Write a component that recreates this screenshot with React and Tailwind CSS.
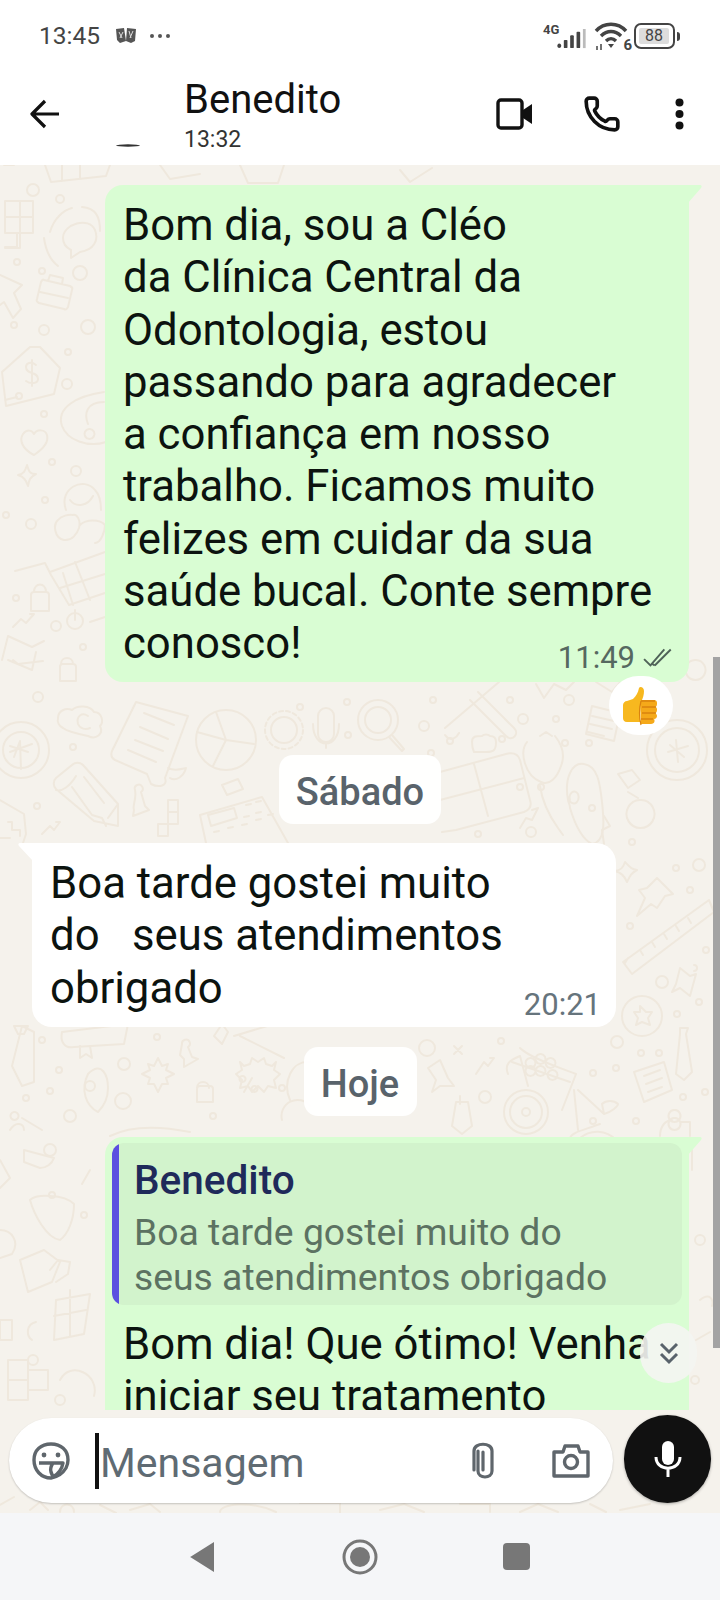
import { Phone } from "lucide-react";

const font = { fontFamily: "Roboto, sans-serif" };

// small rings scattered across the wallpaper
const rings = [
  [33, 190, 6], [60, 199, 4], [17, 262, 3], [42, 271, 3], [80, 273, 7], [14, 325, 3], [44, 330, 5], [88, 327, 7],
  [68, 352, 3], [67, 384, 5], [44, 414, 3], [52, 462, 3], [76, 471, 5], [45, 500, 3], [6, 515, 3], [31, 524, 5],
  [16, 598, 3], [56, 626, 5], [83, 647, 3], [38, 697, 5], [73, 747, 3], [37, 806, 3], [300, 707, 3], [347, 702, 3],
  [348, 735, 3], [424, 726, 5], [433, 700, 3], [450, 741, 3], [510, 700, 3], [523, 719, 5], [556, 719, 3], [569, 700, 5],
  [502, 739, 3], [431, 753, 3], [565, 743, 3], [520, 787, 3], [589, 743, 3], [541, 787, 3], [478, 834, 3], [531, 832, 5],
  [592, 808, 3], [632, 842, 3], [676, 868, 3], [699, 865, 6], [690, 890, 3], [630, 926, 3], [706, 950, 3], [662, 982, 6],
  [699, 1002, 3], [677, 1014, 3], [42, 1040, 3], [124, 1064, 6], [59, 1070, 3], [157, 1037, 3], [50, 1091, 3], [26, 1098, 3],
  [70, 1116, 6], [123, 1101, 8], [213, 1116, 3], [282, 1088, 3], [427, 1048, 8], [501, 1041, 3], [617, 1042, 6], [641, 1053, 3],
  [659, 1053, 3], [593, 1073, 3], [616, 1068, 3], [593, 1121, 3], [683, 1097, 3], [485, 1097, 6], [705, 1092, 3], [636, 1121, 3],
  [52, 1195, 3], [84, 1215, 3], [50, 1150, 6], [33, 1360, 5], [60, 1400, 5], [695, 1380, 4], [700, 1240, 5],
];

const Wallpaper = () => (
  <svg
    className="absolute inset-0 w-full h-full"
    viewBox="0 165 720 1348"
    fill="none"
    stroke="#efe8dd"
    strokeWidth="2"
    strokeLinejoin="round"
    strokeLinecap="round"
  >
    {rings.map(([x, y, r], i) => (
      <circle key={i} cx={x} cy={y} r={r} />
    ))}
    {/* top strip */}
    <path d="M45 165l6 17 55-6 4-11M62 165v16M80 165v14M14 165h-10M160 165l10 14 30-5M240 165l8 18h30l6-18M400 170l10 12 22-14" />
    <path d="M5 201h28v32h-28zM33 217h-28M5 233h12v14h-12M20 201v47h-15" />
    <path d="M63 238c0-14 26-22 32-8 4 10-1 20-15 22l-9 6 0-8c-6-3-8-7-8-12zM50 232c4-14 14-22 22-24M44 238c2 14 6 22 14 28M82 207c14 1 18 10 18 24" />
    <path d="M0 275l22 10-8 8 7 16-8 9-9-16-4 3" />
    {/* briefcase */}
    <path d="M44 280l26 6c2 1 3 2 2 4l-4 17c-1 2-2 3-4 2l-25-6c-2-1-3-2-2-4l4-17c1-2 2-3 3-2zM48 281l2-6 13 3-1 6M40 292l28 6" />
    {/* price tag */}
    <path d="M30 347l-28 25 4 34 48-12 6-26-20-21zM36 365c-5-4-10-2-10 2 0 8 12 4 12 12 0 5-8 5-12 2M32 360v26M5 400l12-3" />
    <circle cx="19" cy="396" r="3" />
    {/* mouse */}
    <path d="M104 392c-28 4-48 16-42 34 5 14 26 22 44 16M104 402c-18 0-20 12-16 22M89 429a5 5 0 1 0 1 0" />
    {/* heart + star */}
    <path d="M34 455c-12-6-15-15-11-21 4-5 9-4 11 0 3-5 11-5 13 1 2 7-4 14-13 20zM27 465c2 7 3 9 9 9-6 3-7 6-8 12-2-6-4-9-10-11 6-1 7-4 9-10z" />
    {/* ball and smile */}
    <path d="M66 510c-8-22 18-34 29-20 4 4 6 12 6 20M70 500c6 8 18 6 23-4M58 520c-5 4-4 18 6 20 8 1 13-6 15-12 2-8-2-14-6-13-4-1-12 1-15 5M80 525c6-6 20-6 25 0 0 6-4 18-10 18" />
    {/* cart */}
    <path d="M15 571l30-8 6 12 18 30 36-12M50 572l55-20M60 588l45-14M73 605l-10-32M90 600l-15-38M75 610v10M90 622l18-6" />
    <circle cx="75" cy="621" r="8" />
    {/* locks, arrow, envelope */}
    <path d="M34 592h12a3 3 0 0 1 3 3v16h-18v-16a3 3 0 0 1 3-3zM34 592c0-10 12-10 12 0M62 664h11a3 3 0 0 1 3 3v14h-16v-14a3 3 0 0 1 2-3zM61 664c0-8 12-8 12 0" />
    <path d="M13 627l8-8 5 4 8-9-4 0M8 636l24 11 12-6M2 660l6-24M8 660l24 10 4-18M13 660l5 4 25-3" />
    {/* cloud + compass + pencil */}
    <path d="M58 718c0-7 8-11 14-8 5-5 18-5 22 2 8 0 10 10 6 14 4 8-4 14-12 10-10-2-20-4-25-8-4-2-6-6-5-10zM88 716c-6-4-12 0-10 8 2 5 8 6 12 4" />
    <circle cx="21" cy="750" r="28" />
    <circle cx="21" cy="750" r="18" />
    <path d="M14 757l6-16 1 28M10 752l22-8M10 746l18 6" />
    <path d="M56 778l16-13a8 8 0 0 1 11 0l35 39 0 22-24-5-38-32c-3-3-3-8 0-11zM56 790c6 2 14-4 20-14M72 787l20 28M84 777l20 26M92 815l10 3 4 8M118 804l-10 14" />
    {/* receipt and pie */}
    <path d="M136 702l52 14-23 62c3 8-6 10-14 6l-4-10-32-14c-4-2-4-6-3-9zM144 713l30 12M140 727l28 12M135 740l28 11M128 750l28 12M168 768c8 4 16 0 18 0-2 8-10 14-16 10" />
    <circle cx="226" cy="740" r="30" />
    <path d="M216 712l10 28 28 4M226 740l-13 26M197 732l29 8" />
    {/* gear */}
    <circle cx="284" cy="730" r="13" />
    <circle cx="284" cy="730" r="19" strokeDasharray="4 3" />
    {/* chess piece + tetris */}
    <path d="M135 790a4 4 0 1 1 6 2l4 14 4 4-16 6 1-6c-2-4 3-12 1-20zM168 800h10v12h-10zM168 812h10v12h-10zM158 824h10v12h-10z" />
    {/* till */}
    <path d="M200 815l62-18 26 46M206 843l-6-28M222 785l16-6 5 10-16 6zM208 815l26-7 3 10-26 8zM246 805l5-1M256 802l5-1M244 817l5-1M256 813l5-1M214 832l5-1M228 828l5-1M242 825l5-1M256 820l5-1M268 815l5-1" />
    {/* shield */}
    <path d="M0 800l24 14 2 20-3 9M8 822h4v8h8v6M0 838h10" />
    <path d="M42 834l8-8 4 4 6-8-4 0" />
    {/* mic, magnifier, wrench */}
    <path d="M318 716a8 8 0 0 1 16 0v18a8 8 0 0 1-16 0zM313 724c0 26 26 26 26 0M326 742v6" />
    <circle cx="378" cy="720" r="20" />
    <circle cx="378" cy="720" r="13" />
    <path d="M392 735l12 14-2 2-13-14M445 728l54-46M470 700l36 36c6 6 14-2 8-8l-36-36M445 735c6 8 12 2 14-2M472 742c0-6 4-6 10-6 2-2 6-2 8 0 4 0 6 2 6 6 0 8-2 10-10 10h-12c-2-4-2-6-2-10z" />
    {/* table */}
    <path d="M440 772l66-18c8-2 12 0 14 6l10 40c2 6-1 10-6 12l-68 18-14 2M474 764l14 52M440 800l84-22" />
    {/* stethoscope */}
    <path d="M527 742c-8 10-2 34 14 40 8 4 16-4 20-16 4-10 2-20-6-30M540 736l6-4 6 4M540 786c2 14 8 28 18 42l5 7" />
    {/* long mouse */}
    <path d="M568 800c-4-22 4-38 16-36 14 2 16 20 18 38 2 18 4 40-10 42-8-4-16-16-22-36 0-4-2-6-2-8zM568 800c8 8 12 0 10-6-4-6-10 0-8 6" />
    <path d="M520 828l6-10 6 2 6-12-6 2" />
    {/* note by the reaction */}
    <path d="M592 706l28 7-6 28-28-7zM592 716l22 5M590 724l22 5M588 732l16 4" />
    <path d="M536 684l8 14 10-14 12 6 8-8M596 682l16 10 10-12" />
    <circle cx="677" cy="750" r="22" />
    <circle cx="677" cy="750" r="30" />
    <path d="M668 752l20-6M676 740l2 22M670 745l14 12" />
    <path d="M632 770l8 10-12 8-10-14zM628 792l10 6M604 816l6 10-8 4 2 14M640 800a14 14 0 1 0 1 0" />
    <path d="M695 660a10 10 0 1 0 1 0" />
    {/* pushpin, ruler, core */}
    <path d="M625 862c5 5 6 7 12 8-6 3-7 6-10 12-3-7-6-9-12-11 6-1 8-3 10-9zM657 878l16 16-8 2-8 12-6-4-14 12 8-18-6-8 8-2z" />
    <path d="M623 962l86-62 5 12-82 62zM628 958l-3 5M640 950l3 5M652 942l3 5M664 934l3 5M676 926l3 5M688 918l3 5" />
    <path d="M680 968l10 8 6-2-6 22-10-8-8 4 4-8zM694 965a3 3 0 1 1 0 6" />
    <circle cx="642" cy="1016" r="20" />
    <path d="M640 1006l6 6 6 0-4 6 2 7-8-3-6 3 2-7-4-6 6 0z" />
    {/* bottom row left */}
    <path d="M22 1026l-10 40 10 20 12-4 0-50zM14 1026l14 0-4 8-6 0zM62 1032l66-8-4 20-50 3c-10 2-14-6-12-15zM80 1046l0 12 6-4 6 4-2-12" />
    <path d="M88 1074c14-14 20 2 20 14 0 6-2 16-10 24-12-6-18-22-10-38z" />
    <circle cx="90" cy="1086" r="5" />
    <path d="M158 1058l4 8 6-2-2 6 8 4-8 4 2 6-6 0-4 8-4-8-6 0 2-6-8-4 8-4-2-6 6 2zM182 1044a4 4 0 1 1 6 3l4 10 6 2-14 8 0-8-4-4zM222 1024l-8 12 8 8 6-12zM234 1036l40-12M240 1036l44 22M200 1086h10a3 3 0 0 1 3 3v13h-16v-13a3 3 0 0 1 3-3zM197 1088c0-8 12-8 12 0" />
    <path d="M240 1062l4 4 6-2 2-6 6 4 6-4 2 6 6 2 4-4-2 8 6 4-6 6 2 8-8-2-4 6-6-6-6 6-4-6-8 2 2-8-6-6 6-4zM244 1092l8-14M242 1076a3 3 0 1 0 1 0M254 1086a3 3 0 1 0 1 0" />
    <path d="M310 1062c-18-2-28 20-20 38M282 1120a16 16 0 0 1 28-14M10 1130c6-10 14-6 14 0M14 1112a4 4 0 1 0 1 0M22 1118l20 12M110 1136c20-10 50-10 80-4" />
    {/* star, bike etc. */}
    <path d="M440 1060l8 18 6 8-14 0-8 6 4-12-8-12zM454 1046l8 8M462 1046l-8 8M476 1074l8-12 4 4 6-8-4 0" />
    <circle cx="526" cy="1112" r="22" />
    <circle cx="526" cy="1112" r="16" />
    <circle cx="526" cy="1112" r="4" />
    <path d="M512 1062l58 20M508 1074c-4-10 2-14 12-18l8 30M520 1048c10 10 40 20 56 26l-14 36M578 1090l26 24M574 1090l4 40M604 1114c8-2 14-8 14-10-4-4-12-4-16 0zM600 1124c-16 6-28 8-30 14M616 1140a26 26 0 0 0-36-2" />
    <path d="M530 1058a5 5 0 1 0 1 0M540 1054a5 5 0 1 0 1 0M550 1058a5 5 0 1 0 1 0M540 1066a5 5 0 1 0 1 0M552 1070a5 5 0 1 0 1 0M530 1066a5 5 0 1 0 1 0" />
    <path d="M634 1072l30-10 8 28-28 12zM644 1076l16-6M646 1084l16-6M648 1092l14-5M680 1028h8l-2 6 6 38-8 8-8-6 4-40zM456 1102h12l4 24-10 8-10-8zM460 1096v8" />
    <path d="M660 1136c0-10 6-16 12-16M690 1136v-14h-10M674 1110a6 6 0 1 0 1 0M674 1118a6 6 0 1 0 1 0" />
    {/* lower left strip */}
    <path d="M30 1200c6-6 34-6 44 4 0 16-6 30-14 36-14-2-26-26-30-40zM20 1260l24-10 16 12-8 20-24 10zM24 1150l30 8c-2 6-8 10-14 10l-16-6zM50 1270l8-10 12 2-2 12-12 8M56 1300l34-6-6 40-30 6zM70 1290v46M54 1316l32-6M32 1340c-6-4-6-16 4-18M8 1360h20v20h-20zM8 1380h20v20h-20zM28 1370h20v20h-20zM60 1380c10-20 40-6 34 16" />
    <path d="M0 1160l10 18-10 10M0 1230c12 0 20 12 12 24l-12 4M90 1170l-8 14M0 1320h12v20h-12z" />
    <path d="M692 1150v20M700 1300c10-8 14 0 12 6M696 1340l14-8M0 1505l14-8M30 1510l10-8 8 8M60 1512c0-10 14-10 14 0M100 1505l16 8M130 1510l20-6 10 8M220 1512c0-8 30-12 56 0M300 1503h40v10M380 1510l24-6 20 8M460 1504h30v8M520 1512l18-8 20 8M590 1504l16 8M620 1510l30-6" />
  </svg>
);

const Reaction = () => (
  <svg viewBox="0 0 40 40" className="w-[40px] h-[40px]">
    <path d="M2 19c0-2 2-4 4-4l6-2c3-3 5-6 6-11 1-2 5-1 5 3 0 4-1 7-3 11l-1 20-13 0c-3 0-4-2-4-4z" fill="#f7b81f" />
    <path d="M20 14h13c2 0 3 1 3 3v1c0 2-1 3-2 3 2 0 2 2 2 3 0 2-1 3-2 3 1 0 2 2 2 3s-1 3-3 3c1 1 1 5-3 5h-10z" fill="#f5a91a" />
    <path d="M20 15h14M21 21h14M21 27h14M20 33h12" stroke="#d9820f" strokeWidth="1.4" fill="none" />
    <path d="M20 15c-2 8-2 16 0 24" stroke="#d9820f" strokeWidth="1.2" fill="none" />
  </svg>
);

const Ticks = () => (
  <svg viewBox="0 0 30 20" className="w-[32px] h-[22px]" fill="none" stroke="#4f6258" strokeWidth="1.8">
    <path d="M1 11l6 6L20 2M11 17L26 2M8 15l3 2" />
  </svg>
);

const Tail = ({ side, color }) =>
  side === "right" ? (
    <svg className="absolute top-0 right-[-13px] w-[14px] h-[18px]" viewBox="0 0 14 18">
      <path d="M0 0h12c2 0 2 2 1 3L0 18z" fill={color} />
    </svg>
  ) : (
    <svg className="absolute top-0 left-[-14px] w-[15px] h-[18px]" viewBox="0 0 15 18">
      <path d="M15 0H2C0 0 0 2 1 3l14 15z" fill={color} />
    </svg>
  );

const DayChip = ({ children, className }) => (
  <div className={`self-center shrink-0 pt-[5px] rounded-[14px] bg-white/95 flex items-center justify-center text-[38px] font-medium text-[#59636b] ${className}`}>
    {children}
  </div>
);

const StatusBar = () => (
  <div className="h-[62px] flex items-center pl-[39px] pr-[40px] pt-[10px] text-[#444]">
    <span className="text-[24.5px] leading-none">13:45</span>
    <svg viewBox="0 0 22 16" className="ml-[15px] w-[22px] h-[16px]" fill="#555">
      <path d="M1 1l8-1 2 13-6 2-3-3zM12 0l9 1-1 12-4 2-5-2z" />
      <path d="M4 4l3 6M8 4l-3 6M14 3l2 7M18 3l-3 7" stroke="#ddd" strokeWidth="1" />
    </svg>
    <svg viewBox="0 0 22 6" className="ml-[12px] w-[22px] h-[6px]" fill="#555">
      <circle cx="3" cy="3" r="2" />
      <circle cx="11" cy="3" r="2" />
      <circle cx="19" cy="3" r="2" />
    </svg>
    <div className="ml-auto flex items-center">
      <div className="relative w-[44px] h-[26px]">
        <span className="absolute left-0 top-0 text-[13px] font-bold leading-none text-[#444]">4G</span>
        <svg viewBox="0 0 32 22" className="absolute right-0 bottom-0 w-[30px] h-[20px]" fill="#444">
          <rect x="0" y="16" width="4" height="5" rx="2" />
          <rect x="7" y="12" width="4" height="9" rx="1" />
          <rect x="14" y="7" width="4" height="14" rx="1" />
          <rect x="21" y="3" width="4" height="18" rx="1" />
          <rect x="28" y="0" width="3" height="21" fill="#bbb" />
        </svg>
      </div>
      <div className="relative ml-[7px] w-[34px] h-[30px]">
        <svg viewBox="0 0 34 30" className="w-[34px] h-[30px]" fill="none" stroke="#444" strokeWidth="3.4">
          <path d="M2 10c8-9 22-9 30 0M7 15c6-6 14-6 20 0M12 20c3-3 7-3 10 0" />
          <path d="M14 23h6l-3 4z" fill="#444" stroke="none" />
          <path d="M3 25v4M7 23v6" strokeWidth="1.5" />
        </svg>
        <span className="absolute right-[-4px] bottom-[-2px] text-[15px] font-bold leading-none text-[#444]">6</span>
      </div>
      <div className="ml-[6px] w-[41px] h-[26px] border-2 border-[#444] rounded-[7px] p-[3px] flex">
        <div className="w-[30px] bg-[#ddd] rounded-[2px] flex items-center justify-center text-[16px] leading-none text-[#444]">88</div>
      </div>
      <div className="ml-[2px] w-[3px] h-[9px] bg-[#444] rounded-r-sm" />
    </div>
  </div>
);

const Header = () => (
  <div className="h-[103px] flex items-center pl-[30px] pr-[36px] bg-white relative z-10">
    <svg viewBox="0 0 30 30" className="w-[30px] h-[30px] shrink-0" fill="none" stroke="#111" strokeWidth="3.2" strokeLinejoin="round">
      <path d="M29 15H3M15 2L2 15l13 13" />
    </svg>
    <svg viewBox="0 0 26 4" className="absolute left-[115px] top-[82px] w-[26px] h-[4px]">
      <ellipse cx="13" cy="1.5" rx="12" ry="1.2" fill="#333" />
    </svg>
    <div className="ml-[124px] pt-[3px] flex flex-col">
      <span className="text-[40px] leading-[46px] text-[#111]">Benedito</span>
      <span className="text-[23px] leading-[28px] mt-[3px] text-[#333]">13:32</span>
    </div>
    <div className="ml-auto flex items-center">
      <svg viewBox="0 0 37 32" className="w-[37px] h-[32px]" fill="none">
        <rect x="2" y="2" width="24" height="28" rx="3" stroke="#111" strokeWidth="3.4" />
        <path d="M27 12l9-6v20l-9-6z" fill="#111" />
      </svg>
      <Phone className="ml-[50px] w-[38px] h-[38px] text-[#111]" strokeWidth={2.3} />
      <svg viewBox="0 0 9 32" className="ml-[54px] w-[9px] h-[32px]" fill="#111">
        <circle cx="4.5" cy="4.5" r="4" />
        <circle cx="4.5" cy="16" r="4" />
        <circle cx="4.5" cy="27.5" r="4" />
      </svg>
    </div>
  </div>
);

const Composer = () => (
  <div className="h-[98px] mt-[5px] pb-[10px] px-[9px] flex items-end justify-between relative">
    <div className="w-[604px] h-[85px] rounded-full bg-white shadow-[0_1px_2px_rgba(0,0,0,0.2)] flex items-center pl-[23px] pr-[23px]">
      <svg viewBox="0 0 38 38" className="w-[38px] h-[38px] shrink-0" fill="none" stroke="#5f666c" strokeWidth="3.4" strokeLinejoin="round">
        <path d="M19 36C9 36 2 28 2 18 2 8 9 2 19 2s17 6 17 16c0 4-1 6-2 8-3 5-8 9-15 10z" />
        <path d="M7 21h24c-1 6-5 11-10 14l-2-5c-1-3 0-6 2-9" />
        <circle cx="12" cy="13" r="2.4" fill="#5f666c" stroke="none" />
        <circle cx="26" cy="13" r="2.4" fill="#5f666c" stroke="none" />
      </svg>
      <div className="ml-[25px] w-[4px] h-[56px] bg-[#111] shrink-0" />
      <span className="ml-[1px] pt-[6px] text-[41px] text-[#5f6b73] leading-none">Mensagem</span>
      <svg viewBox="0 0 26 38" className="ml-auto w-[26px] h-[38px] shrink-0" fill="none" stroke="#5f666c" strokeWidth="3.2" strokeLinecap="round">
        <path d="M8 9v20c0 8 14 8 14 0V9C22 0 4 0 4 9v19M13 10v18" />
      </svg>
      <svg viewBox="0 0 38 34" className="ml-[56px] w-[38px] h-[34px] shrink-0" fill="none" stroke="#5f666c" strokeWidth="3.4" strokeLinejoin="round">
        <path d="M2 8h9l2-6h13l2 6h8v24H2z" />
        <circle cx="19" cy="18" r="6.5" />
      </svg>
    </div>
    <div className="w-[87px] h-[88px] rounded-full bg-[#111] shadow-[0_1px_3px_rgba(0,0,0,0.3)] flex items-center justify-center">
      <svg viewBox="0 0 28 36" className="w-[28px] h-[36px]" fill="none" stroke="#fff" strokeWidth="3">
        <rect x="8" y="0" width="12" height="24" rx="6" fill="#fff" stroke="none" />
        <path d="M2 16c0 15 24 15 24 0M14 27v9" />
      </svg>
    </div>
  </div>
);

const App = () => {
  return (
    <div className="w-[720px] h-[1600px] flex flex-col overflow-hidden bg-white" style={font}>
      <StatusBar />
      <Header />

      <main className="relative h-[1348px] bg-[#f5f2ec]">
        <Wallpaper />

        <div className="relative h-[1245px] overflow-hidden flex flex-col pt-[20px] text-[43.7px] leading-[52.3px] text-[#0c130f]">
          {/* first message */}
          <div className="relative shrink-0 self-start ml-[105px] w-[584px] h-[497px] pt-[14px] pl-[18px] bg-[#d9fdd3] rounded-[18px] rounded-tr-none">
            <Tail side="right" color="#d9fdd3" />
            Bom dia, sou a Cléo<br />
            da Clínica Central da<br />
            Odontologia, estou<br />
            passando para agradecer<br />
            a confiança em nosso<br />
            trabalho. Ficamos muito<br />
            felizes em cuidar da sua<br />
            saúde bucal. Conte sempre<br />
            conosco!
            <div className="absolute right-[14px] bottom-[6px] flex items-center gap-[8px] text-[31px] leading-[36px] text-[#566860]">
              11:49 <Ticks />
            </div>
            <div className="absolute right-[16px] bottom-[-53px] w-[64px] h-[59px] rounded-full bg-white flex items-center justify-center">
              <Reaction />
            </div>
          </div>

          <DayChip className="mt-[73px] w-[162px] h-[69px]">Sábado</DayChip>

          {/* reply from the patient */}
          <div className="relative shrink-0 self-start mt-[19px] ml-[32px] w-[584px] h-[184px] pt-[14px] pl-[18px] bg-white rounded-[20px] rounded-tl-none">
            <Tail side="left" color="#ffffff" />
            Boa tarde gostei muito<br />
            do &nbsp; seus atendimentos<br />
            obrigado
            <div className="absolute right-[15px] bottom-[4px] text-[31px] leading-[36px] text-[#66747c]">20:21</div>
          </div>

          <DayChip className="mt-[20px] w-[113px] h-[69px]">Hoje</DayChip>

          {/* answer with the quoted message */}
          <div className="relative shrink-0 self-start mt-[21px] ml-[105px] w-[584px] pt-[6px] px-[7px] bg-[#d9fdd3] rounded-tl-[18px]">
            <Tail side="right" color="#d9fdd3" />
            <div className="h-[162px] flex rounded-[12px] overflow-hidden bg-[#d2f3cc]">
              <div className="w-[7px] bg-[#5b50e0]" />
              <div className="pl-[15px] pt-[14px]">
                <div className="text-[40.5px] leading-[46px] font-medium text-[#1f2a5a]">Benedito</div>
                <div className="mt-[7px] text-[37.3px] leading-[45px] text-[#5c7262]">
                  Boa tarde gostei muito do<br />
                  seus atendimentos obrigado
                </div>
              </div>
            </div>
            <div className="pl-[11px] pt-[13px] pb-[30px]">
              Bom dia! Que ótimo! Venha<br />
              iniciar seu tratamento
            </div>
          </div>
        </div>

        <Composer />

        {/* floating bits over the list */}
        <div className="absolute right-[23px] top-[1158px] w-[57px] h-[60px] rounded-full bg-[#f4f5f2]/90 flex items-center justify-center">
          <svg viewBox="0 0 20 24" className="w-[20px] h-[24px]" fill="none" stroke="#59636b" strokeWidth="3">
            <path d="M2 3l8 8 8-8M2 13l8 8 8-8" />
          </svg>
        </div>
        <div className="absolute right-0 top-[492px] w-[7px] h-[691px] bg-[#a3a3a3]" />
      </main>

      <nav className="h-[87px] bg-[#f5f6f8] flex items-center pl-[190px]">
        <svg viewBox="0 0 24 30" className="w-[24px] h-[30px]" fill="#777">
          <path d="M24 0v30L1 15.5c-1-.5-1-.5 0-1z" />
        </svg>
        <svg viewBox="0 0 36 36" className="ml-[128px] w-[36px] h-[36px]" fill="#777">
          <circle cx="18" cy="18" r="16" fill="none" stroke="#777" strokeWidth="3" />
          <circle cx="18" cy="18" r="10" />
        </svg>
        <div className="ml-[125px] w-[27px] h-[27px] rounded-[4px] bg-[#777]" />
      </nav>
    </div>
  );
};

export default App;
